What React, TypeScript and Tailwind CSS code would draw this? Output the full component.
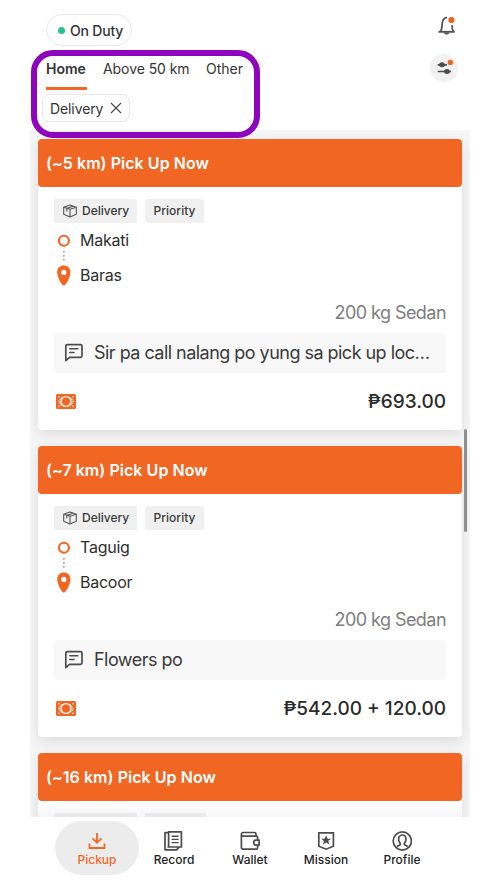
import React from "react";

const ORANGE = "#f16622";

function BellIcon() {
  return (
    <svg className="mt-px" width="20" height="22" viewBox="0 0 20 22" fill="none">
      <path d="M9 2.4C5.4 3 4.4 5.6 4.2 8.8C4 12.2 3.9 14 2.8 16.4M14 10.2C14.1 12.8 14.3 14.4 15.2 16.4" stroke="#555" strokeWidth="1.8" />
      <path d="M.4 16.8H16.8" stroke="#555" strokeWidth="1.9" />
      <path d="M5.8 17.4H11.4C11.1 20.2 6.1 20.2 5.8 17.4Z" fill="#555" />
      <circle cx="13.4" cy="5" r="3.1" fill="#f0641e" />
    </svg>
  );
}

function FilterIcon() {
  return (
    <svg width="28" height="28" viewBox="0 0 28 28" fill="none">
      <path d="M7.7 10.8H17M7.7 17.5H21" stroke="#4d4d4d" strokeWidth="1.7" />
      <ellipse cx="12" cy="10.8" rx="2.9" ry="2.5" fill="#4d4d4d" />
      <ellipse cx="17" cy="17.5" rx="2.9" ry="2.5" fill="#4d4d4d" />
      <circle cx="20.3" cy="8.4" r="3.6" fill="#f1f1f1" />
      <circle cx="20.3" cy="8.4" r="2.7" fill="#f0641e" />
    </svg>
  );
}

function BoxIcon() {
  return (
    <svg width="14" height="14" viewBox="0 0 14 14" fill="none" stroke="#555" strokeWidth="1.1" strokeLinejoin="round">
      <path d="M7 .9L13.3 3.2V10.3L7 13L.7 10.3V3.2Z" />
      <path d="M.7 3.2L7 5.3L13.3 3.2M7 5.3V13M3.8 4.3V7.4M3.8 4.3L10.2 2.2" />
    </svg>
  );
}

function NoteIcon() {
  return (
    <svg width="20" height="20" viewBox="0 0 20 20" fill="none" stroke="#4c4c4c" strokeWidth="1.7" strokeLinejoin="round" strokeLinecap="round">
      <path d="M3.4 1.6H16.4Q18 1.6 18 3.2V12.7Q18 14.3 16.4 14.3H5.6L1.8 17.7V3.2Q1.8 1.6 3.4 1.6Z" />
      <path d="M5.8 5.8H13.8M5.8 9.6H10" strokeWidth="1.5" />
    </svg>
  );
}

function CashIcon() {
  return (
    <svg width="20" height="15" viewBox="0 0 20 15" fill="none">
      <rect width="20" height="15" rx="1.6" fill={ORANGE} />
      <circle cx="10" cy="7.5" r="4.9" stroke="#fff" strokeWidth="1.4" />
      <path d="M5.8 3.4C5.2 4.9 4.2 5.6 2.9 6M5.8 11.6C5.2 10.1 4.2 9.4 2.9 9M14.2 3.4C14.8 4.9 15.8 5.6 17.1 6M14.2 11.6C14.8 10.1 15.8 9.4 17.1 9" stroke="#fff" strokeWidth="0.9" />
      <g fill="#fff">
        <circle cx="3" cy="2.8" r=".8" /><circle cx="17" cy="2.8" r=".8" />
        <circle cx="3" cy="12.2" r=".8" /><circle cx="17" cy="12.2" r=".8" />
        <circle cx="2.9" cy="7.5" r=".7" /><circle cx="17.1" cy="7.5" r=".7" />
      </g>
    </svg>
  );
}

function RouteIcon() {
  return (
    <svg width="14" height="56" viewBox="0 0 14 56" fill="none">
      <circle cx="6.9" cy="9.7" r="5" stroke={ORANGE} strokeWidth="2.1" />
      <g fill="#999">
        <rect x="6.1" y="20" width="1.6" height="1.6" />
        <rect x="6.1" y="24" width="1.6" height="1.6" />
        <rect x="6.1" y="28" width="1.6" height="1.6" />
      </g>
      <path d="M6.8 34.5C10.6 34.5 13.4 37.2 13.4 41C13.4 45.8 9.9 53.2 6.8 54.8C3.7 53.2 .2 45.8 .2 41C.2 37.2 3 34.5 6.8 34.5Z" fill={ORANGE} />
      <circle cx="6.8" cy="41.4" r="2.6" fill="#fff" />
    </svg>
  );
}

type Job = { title: string; from: string; to: string; note: string; price: string };

const jobs: Job[] = [
  { title: "(~5 km) Pick Up Now", from: "Makati", to: "Baras", note: "Sir pa call nalang po yung sa pick up loc…", price: "₱693.00" },
  { title: "(~7 km) Pick Up Now", from: "Taguig", to: "Bacoor", note: "Flowers po", price: "₱542.00 + 120.00" },
];

const cardClass = "shrink-0 rounded bg-white shadow-[0_4px_14px_rgba(0,0,0,0.11)]";

function CardTitle({ children }: { children: React.ReactNode }) {
  return (
    <h2 className="flex h-12 items-center rounded bg-[#f16622] pl-2 text-[16px] font-semibold tracking-[0.04px] text-white">
      <span>{children}</span>
    </h2>
  );
}

function JobCard({ job }: { job: Job }) {
  return (
    <article className={`${cardClass} h-[291px]`}>
      <CardTitle>{job.title}</CardTitle>
      <div className="px-4 pt-3">
        <div className="flex h-6 gap-2 text-[12px] font-medium text-[#3a3a3a]">
          <span className="flex w-[83px] items-center gap-[5px] rounded-[2px] bg-[#f0f0f0] pl-[9px]"><BoxIcon /><span>Delivery</span></span>
          <span className="flex w-[59px] items-center justify-center rounded-[2px] bg-[#f0f0f0]">Priority</span>
        </div>
        <div className="mt-2 flex h-[60px] gap-[9px] pl-[3px]">
          <RouteIcon />
          <div className="-mt-px flex flex-col gap-[15px] text-[16px] leading-5 tracking-[-0.25px] text-[#2e2e2e]">
            <span className="h-5">{job.from}</span>
            <span className="h-5">{job.to}</span>
          </div>
        </div>
        <div className="mt-3 text-right text-[18px] leading-5 tracking-[-0.55px] text-[#7d7d7d]"><span>200 kg Sedan</span></div>
        <div className="mt-[10px] flex h-10 items-center rounded bg-[#f8f8f8] pl-[10px]">
          <NoteIcon />
          <span className="ml-[10px] pb-[2px] text-[18px] tracking-[-0.53px] whitespace-nowrap text-[#3a3a3a]">{job.note}</span>
        </div>
        <div className="mt-4 flex h-6 items-center justify-between pl-[2px]">
          <CashIcon />
          <span className="pt-[2px] text-[19px] font-medium text-[#2b2b2b]">{job.price}</span>
        </div>
      </div>
    </article>
  );
}

const navStroke = { fill: "none", stroke: "#4c4c4c", strokeWidth: 1.7, strokeLinejoin: "round" as const };

const nav = [
  { label: "Pickup", icon: (
    <svg width="20" height="20" viewBox="0 0 20 20" fill="none" stroke="#f16622" strokeWidth="1.8">
      <path d="M10 2V11M5.5 7.3L10 11.8L14.5 7.3M2.5 12.5V17H17.5V12.5" />
    </svg>) },
  { label: "Record", icon: (
    <svg width="20" height="20" viewBox="0 0 20 20" {...navStroke}>
      <path d="M4.6 .9H17.4V16H4.6ZM4.6 1.6H1V18.8H12.6L15.2 16M4.6 16H3.4" />
      <path d="M7.6 5.2H14.6M7.6 8.4H14.6M7.6 11.6H14.6" strokeWidth="1.4" />
    </svg>) },
  { label: "Wallet", icon: (
    <svg width="20" height="20" viewBox="0 0 20 20" {...navStroke}>
      <path d="M16 5V3Q16 1.5 14.5 1.5H3.2Q1.4 1.5 1.4 3.3V16.3Q1.4 18.2 3.2 18.2H16.2Q17.6 18.2 17.6 16.8V14.2M1.4 3.5Q1.5 5.2 3.2 5.2H16.2Q17.6 5.2 17.6 6.6V9" />
      <path d="M19.1 9.1V14.1H15.9C12.9 14.1 12.9 9.1 15.9 9.1Z" />
    </svg>) },
  { label: "Mission", icon: (
    <svg width="20" height="20" viewBox="0 0 20 20" {...navStroke}>
      <path d="M2.8 1.8H17.4V15.2L10.1 18.2L2.8 15.2Z" strokeLinejoin="miter" />
      <path d="M10.1 4.6L11.6 7.7H15L12.3 9.9L13.3 13.4L10.1 11.5L6.9 13.4L7.9 9.9L5.2 7.7H8.6Z" fill="#4c4c4c" stroke="none" />
    </svg>) },
  { label: "Profile", icon: (
    <svg width="20" height="20" viewBox="0 0 20 20" {...navStroke}>
      <circle cx="10.3" cy="10" r="9.1" />
      <path d="M10.3 4C12.9 4 14 5.9 14 8.3C14 10.2 13.2 11.5 12.4 12.2V13.8L15.8 15.6M10.3 4C7.7 4 6.6 5.9 6.6 8.3C6.6 10.2 7.4 11.5 8.2 12.2V13.8L4.8 15.6" />
    </svg>) },
];

export default function App() {
  return (
    <div className="h-[888px] w-[500px] overflow-hidden bg-white font-['Inter','Liberation_Sans',sans-serif]">
      <div className="relative mx-auto flex h-full w-[440px] flex-col">
        <header className="h-[130px] shrink-0">
          <div className="flex h-[50px] items-start justify-between pt-[14px] pr-3 pl-4">
            <div className="flex h-8 w-[86px] items-center gap-[5px] rounded-full border border-[#e8e8e8] pl-[11px] text-[14px] font-medium tracking-[-0.2px] text-[#333]">
              <i className="size-[7px] shrink-0 rounded-full bg-[#27bf98]" />
              <span className="whitespace-nowrap">On Duty</span>
            </div>
            <BellIcon />
          </div>
          <div className="flex justify-between pr-3 pl-4">
            <nav className="flex h-10 gap-4 pt-2 text-[14px] leading-[22px] text-[#333]">
              <div className="h-8 w-[41px] border-b-[3px] border-[#f16622] font-semibold whitespace-nowrap"><span>Home</span></div>
              <span className="w-[87px] tracking-[-0.07px] whitespace-nowrap">Above 50 km</span>
              <span>Other</span>
            </nav>
            <div className="mt-1 size-7 rounded-full bg-[#f1f1f1]"><FilterIcon /></div>
          </div>
          <div className="mt-1 ml-3 flex h-7 w-[88px] items-center justify-between rounded-lg border border-[#e8e8e8] pr-[7px] pl-[7px] text-[14px] text-[#333]">
            <span className="tracking-[-0.1px]">Delivery</span>
            <svg width="12" height="12" viewBox="0 0 12 12" stroke="#444" strokeWidth="1.1"><path d="M1 1L11 11M11 1L1 11" /></svg>
          </div>
        </header>
        <main className="relative flex h-[687px] shrink-0 flex-col gap-4 overflow-hidden bg-[#f6f6f6] px-2 pt-[9px]">
          {jobs.map((job) => <JobCard key={job.title} job={job} />)}
          <article className={`${cardClass} h-[80px]`}>
            <CardTitle>(~16 km) Pick Up Now</CardTitle>
            <div className="flex h-4 gap-2 bg-linear-to-b from-white to-[#f6f6f6] px-4 pt-3">
              <span className="h-1 w-[83px] rounded-t-[2px] bg-[#e9e9e9]" />
              <span className="h-1 w-[61px] rounded-t-[2px] bg-[#e9e9e9]" />
            </div>
          </article>
          <div className="absolute top-[299px] right-[3px] h-[103px] w-[3px] rounded-full bg-[#8f8f8f]" />
        </main>
        <footer className="flex h-[71px] pt-1 pl-[25px]">
          {nav.map((item, i) => (
            <div key={item.label} className={i === 0 ? "flex h-[54px] w-[84px] flex-col items-center rounded-full bg-[#ececec] pt-[10px] text-[#f16622]" : `flex h-[54px] w-[76px] flex-col items-center pt-[10px] text-[#222] ${i === 1 ? "-ml-[3px]" : ""}`}>
              {item.icon}
              <span className="text-[12px] leading-[18px] font-medium">{item.label}</span>
            </div>
          ))}
        </footer>
        <div className="pointer-events-none absolute top-[50px] left-[1px] h-[88px] w-[229px] rounded-[22px] border-[6px] border-[#8d06bd]" />
      </div>
    </div>
  );
}
